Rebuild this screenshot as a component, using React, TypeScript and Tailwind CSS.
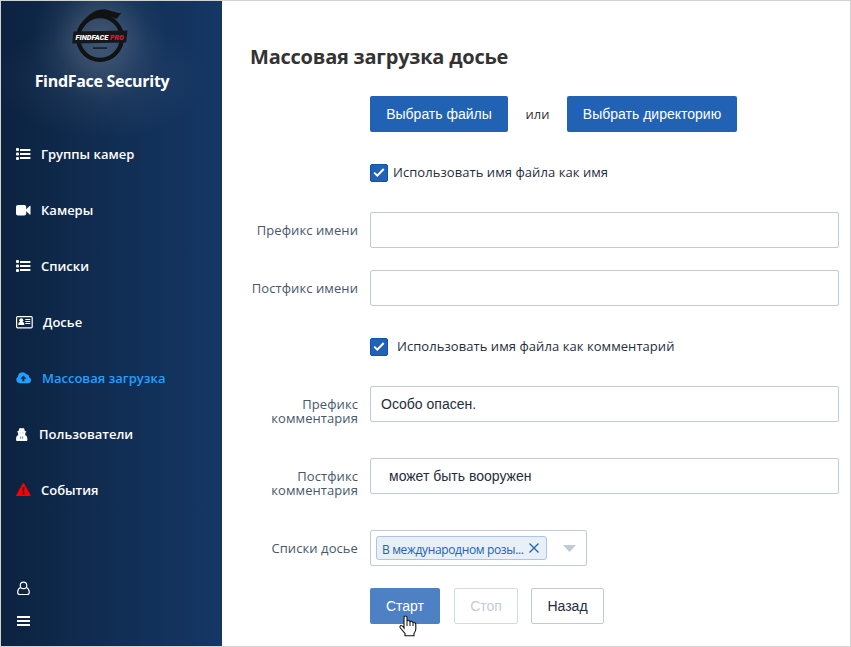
import React from "react";

const noto = "font-['Open_Sans','Noto_Sans',sans-serif]";
const arial = "font-['Liberation_Sans',Arial,sans-serif]";

function Logo() {
  return (
    <svg width="60" height="54" viewBox="0 0 60 54" className="block">
      <circle cx="30" cy="30" r="21.8" fill="none" stroke="#111212" strokeWidth="4.3" />
      <path d="M9 22 C13 10 23 1 34 1.2 C39 1.3 44 5 51.5 5 C49 7 49 9 46 11 C38 6 21 6 13 20 Z" fill="#111212" />
      <path d="M3.4 23.5 L57.5 22.5 L56.2 34.5 L2.2 35.5 Z" fill="#15171a" />
      <rect x="23" y="39.2" width="14" height="1.7" fill="#1b2029" />
      <text x="5.5" y="31.8" fontFamily="Roboto, sans-serif" fontSize="8" fontWeight="900" fontStyle="italic" fill="#fff" textLength="32.8" lengthAdjust="spacingAndGlyphs">FINDFACE</text>
      <text x="40" y="31.8" fontFamily="Roboto, sans-serif" fontSize="8" fontWeight="900" fontStyle="italic" fill="#ee103c" textLength="13.6" lengthAdjust="spacingAndGlyphs">PRO</text>
    </svg>
  );
}

function ListIcon() {
  return (
    <svg width="15" height="12" viewBox="0 0 15 12" fill="#fff">
      <rect y="0" width="3" height="3" rx="1" /><rect y="4.5" width="3" height="3" rx="1" /><rect y="9" width="3" height="3" rx="1" />
      <rect x="4" y="1" width="10.4" height="2" /><rect x="4" y="5" width="10.4" height="2" /><rect x="4" y="9" width="10.4" height="2" />
    </svg>
  );
}

function VideoIcon() {
  return (
    <svg width="15" height="11" viewBox="0 0 15 11" fill="#fff">
      <rect width="10.2" height="10.5" rx="2" />
      <path d="M9.2 5.2 L13.6 1 Q14.5 .5 14.5 1.4 V9.2 Q14.5 10 13.6 9.5 Z" />
    </svg>
  );
}

function CardIcon() {
  return (
    <svg width="17" height="13" viewBox="0 0 17 13">
      <rect x=".6" y=".6" width="15.6" height="11.2" rx="1" fill="none" stroke="#fff" strokeWidth="1.2" />
      <circle cx="5.3" cy="4.3" r="2" fill="#fff" />
      <path d="M2.2 9 Q2.2 6.1 4 5.7 H6.6 Q8.4 6.1 8.4 9 Z" fill="#fff" />
      <path d="M9.3 3.5 H14.3 M9.3 5.5 H14.3 M9.3 7.5 H14.3" stroke="#fff" strokeWidth="1.1" />
    </svg>
  );
}

function CloudIcon() {
  return (
    <svg width="16" height="12" viewBox="0 0 16 12">
      <path d="M3.6 11.2 A3.5 3.5 0 0 1 2 4.7 A4.5 4.5 0 0 1 10.3 2.3 A2.4 2.4 0 0 1 13 5.2 A3.1 3.1 0 0 1 12.3 11.2 Z" fill="#20a0ff" />
      <path d="M7.4 3.5 L10.5 6.7 H8.4 V9.2 H6.4 V6.7 H4.3 Z" fill="#102d50" />
    </svg>
  );
}

function AgentIcon() {
  return (
    <svg width="12" height="13" viewBox="0 0 12 13" fill="#fff">
      <path d="M2.6 3 Q2.8 .2 4.2 .1 Q5.7 .6 7.2 .1 Q8.6 .2 8.8 3 L10.4 3.6 Q10.2 4.6 9.3 4.8 V6.2 Q9.2 7 8.8 7.3 L10.2 7.6 Q11.4 8.6 11.4 12 Q11.3 13 10.2 13 H1.2 Q.1 13 0 12 Q0 8.6 1.2 7.6 L2.6 7.3 Q2.2 7 2.1 6.2 V4.8 Q1.2 4.6 1 3.6 Z" />
      <path d="M3.4 5 H5.2 M6.2 5 H8" stroke="#a9b6ca" strokeWidth=".6" />
      <path d="M4.7 8.4 V10.8 M6.7 8.4 V10.8" stroke="#5e5a98" strokeWidth=".8" />
    </svg>
  );
}

function WarningIcon() {
  return (
    <svg width="15" height="14" viewBox="0 0 15 14">
      <path d="M6.7 .6 Q7.4 -.3 8.1 .6 L14.4 11.8 Q14.9 13 13.8 13.1 H1 Q-.1 13 .4 11.8 Z" fill="#ff0000" />
      <path d="M6.3 4 H8.5 L8.2 8.4 H6.6 Z M6.5 9.3 H8.4 V11.2 H6.5 Z" fill="#441626" />
    </svg>
  );
}

const items = [
  { label: "Группы камер", icon: <ListIcon />, gap: "w-[25px]" },
  { label: "Камеры", icon: <VideoIcon />, gap: "w-[25px]" },
  { label: "Списки", icon: <ListIcon />, gap: "w-[25px]" },
  { label: "Досье", icon: <CardIcon />, gap: "w-[27px]" },
  { label: "Массовая загрузка", icon: <CloudIcon />, gap: "w-[26px]", active: true },
  { label: "Пользователи", icon: <AgentIcon />, gap: "w-[23px]" },
  { label: "События", icon: <WarningIcon />, gap: "w-[25px]" },
];

function Sidebar() {
  return (
    <aside className="flex w-[221px] shrink-0 flex-col bg-[radial-gradient(circle_at_99px_34px,rgba(255,255,255,0.18)_0px,rgba(255,255,255,0.13)_25px,rgba(255,255,255,0.04)_47px,transparent_68px),radial-gradient(ellipse_105px_60px_at_101px_78px,rgba(255,255,255,0.08),rgba(255,255,255,0.035)_55%,transparent),linear-gradient(to_right,#0c2340,#153765)]">
      <div className="flex h-[125px] flex-col items-center pr-[19px] pt-[7px]">
        <div className="-ml-[4px]"><Logo /></div>
        <div className="mt-[8px] text-[16px] font-bold leading-[22px] tracking-[-0.3px] text-white">FindFace Security</div>
      </div>
      <nav className="flex flex-col">
        {items.map((item) => (
          <a key={item.label} className={`flex h-14 items-center pl-[15px] text-[13px] font-semibold ${item.active ? "text-[#20a0ff]" : "text-white"}`}>
            <span className={`flex shrink-0 ${item.gap}`}>{item.icon}</span>
            <span className="whitespace-nowrap pt-[2px]">{item.label}</span>
          </a>
        ))}
      </nav>
      <div className="mt-auto flex flex-col gap-[20px] pb-[20px] pl-[16px]">
        <svg width="13" height="15" viewBox="0 0 14 15" fill="none" stroke="#fff" strokeWidth="1.25">
          <circle cx="7" cy="4.2" r="3.5" />
          <path d="M4 6.5 C1.5 7.5 .7 9.5 .7 11.5 Q.7 14 3 14 H11 Q13.2 14 13.2 11.5 C13.2 9.5 12.5 7.5 10 6.5" />
        </svg>
        <svg width="13" height="10" viewBox="0 0 13 10" fill="#fff">
          <rect width="13" height="2" /><rect y="4" width="13" height="2" /><rect y="8" width="13" height="2" />
        </svg>
      </div>
    </aside>
  );
}

function Check() {
  return (
    <span className="flex size-[18px] shrink-0 items-center justify-center rounded-[2px] border border-[#0b52ba] bg-[#2262b5]">
      <svg width="12" height="10" viewBox="0 0 12 10" fill="none" stroke="#fff" strokeWidth="2"><path d="M1.2 4.6 L4.3 7.6 L10.7 1" /></svg>
    </span>
  );
}

function Field({ label, value = "", tall = false, indent = false }: { label: string; value?: string; tall?: boolean; indent?: boolean }) {
  return (
    <div className="flex h-9">
      <label className={`w-[136px] shrink-0 pt-[11px] text-right text-[13px] leading-[14px] tracking-[0.08px] text-[#48576a] ${tall ? "pl-10" : ""}`}>{label}</label>
      <div className={`ml-3 flex h-9 w-[469px] items-center whitespace-pre rounded-[2px] border border-[#bfcbd9] text-[14px] text-[#1f2d3d] ${arial} ${indent ? "pl-[18px]" : "pl-[10px]"}`}>{value}</div>
    </div>
  );
}

export default function App() {
  return (
    <div className={`relative flex h-[647px] w-[851px] overflow-hidden border border-[#d2d2d2] bg-white ${noto}`}>
      <Sidebar />
      <main className="min-w-0 flex-1">
        <h1 className="ml-[28px] mt-[41px] whitespace-nowrap text-[20px] font-bold leading-[30px] tracking-[-0.22px] text-[#333]">Массовая загрузка досье</h1>
        <div className="ml-[148px] mt-[24px] flex items-center text-[14px] text-white">
          <button className={`h-9 w-[138px] rounded-[2px] bg-[#2262b5] ${arial}`}>Выбрать файлы</button>
          <span className="w-[59px] pt-[2px] text-center text-[13px] text-[#333]">или</span>
          <button className={`h-9 w-[170px] rounded-[2px] bg-[#2262b5] ${arial}`}>Выбрать директорию</button>
        </div>
        <div className="ml-[148px] mt-[32px] flex h-[18px] items-center gap-[5px] text-[13px] tracking-[0.06px] text-[#1f2d3d]"><Check /><span>Использовать имя файла как имя</span></div>
        <div className="mt-[30px] flex flex-col gap-[22px]">
          <Field label="Префикс имени" />
          <Field label="Постфикс имени" />
        </div>
        <div className="ml-[148px] mt-[32px] flex h-[18px] items-center gap-[9px] text-[13px] tracking-[0.06px] text-[#1f2d3d]"><Check /><span>Использовать имя файла как комментарий</span></div>
        <div className="mt-[30px] flex flex-col gap-9">
          <Field label="Префикс комментария" value="Особо опасен." tall />
          <Field label="Постфикс комментария" value="может быть вооружен" tall indent />
        </div>
        <div className="mt-9 flex h-9">
          <div className="w-[136px] pt-[11px] text-right text-[13px] leading-[14px] tracking-[0.08px] text-[#48576a]">Списки досье</div>
          <div className="ml-3 flex w-[217px] items-center rounded-[2px] border border-[#bfcbd9] pl-[5px]">
            <div className="flex h-6 w-[171px] items-center rounded-[3px] border border-[#a9c5e9] bg-[#e8eff8] pl-[5px] text-[12px] text-[#2262b5]">
              <span className="w-[147px] whitespace-nowrap pt-[3px] tracking-[-0.35px]">В международном розы...</span>
              <svg width="10" height="10" viewBox="0 0 10 10" stroke="#2262b5" strokeWidth="1.3"><path d="M.5 .5 L9.5 9.5 M9.5 .5 L.5 9.5" /></svg>
            </div>
            <svg className="ml-[16px]" width="13" height="7" viewBox="0 0 13 7" fill="#bfcbd9"><path d="M0 0 H13 L7.3 6.3 Q6.5 7 5.7 6.3 Z" /></svg>
          </div>
        </div>
        <div className={`ml-[148px] mt-[22px] flex text-[14px] ${arial}`}>
          <button className="h-9 w-[70px] rounded-[2px] bg-[#4e81c4] text-white">Старт</button>
          <button className="ml-[14px] h-9 w-[64px] rounded-[2px] border border-[#d1dbe5] text-[#bfcbd9]">Стоп</button>
          <button className="ml-[13px] h-9 w-[73px] rounded-[2px] border border-[#bfcbd9] text-[#1f2d3d]">Назад</button>
        </div>
      </main>
      <svg className="absolute left-[398px] top-[614px]" width="18" height="22" viewBox="0 0 18 22">
        <path d="M5 13 V2.5 Q5 1 6.4 1 Q8 1 8 2.5 V6.5 Q8 5.5 9.3 5.5 Q11 5.5 11 7.2 Q11 6.3 12.3 6.3 Q14 6.3 14 8 Q14 7.5 15 7.5 Q16.8 7.5 16.8 10 V14 Q16.8 16 15 18.5 V20.8 H6 V18.5 L1.2 12.8 Q.4 11 2 10.5 Q3.3 10.3 5 13 Z" fill="#fff" stroke="#111" strokeWidth="1.1" />
        <path d="M8 6.5 V11 M11 7 V11 M14 8 V11" stroke="#111" fill="none" />
      </svg>
    </div>
  );
}
